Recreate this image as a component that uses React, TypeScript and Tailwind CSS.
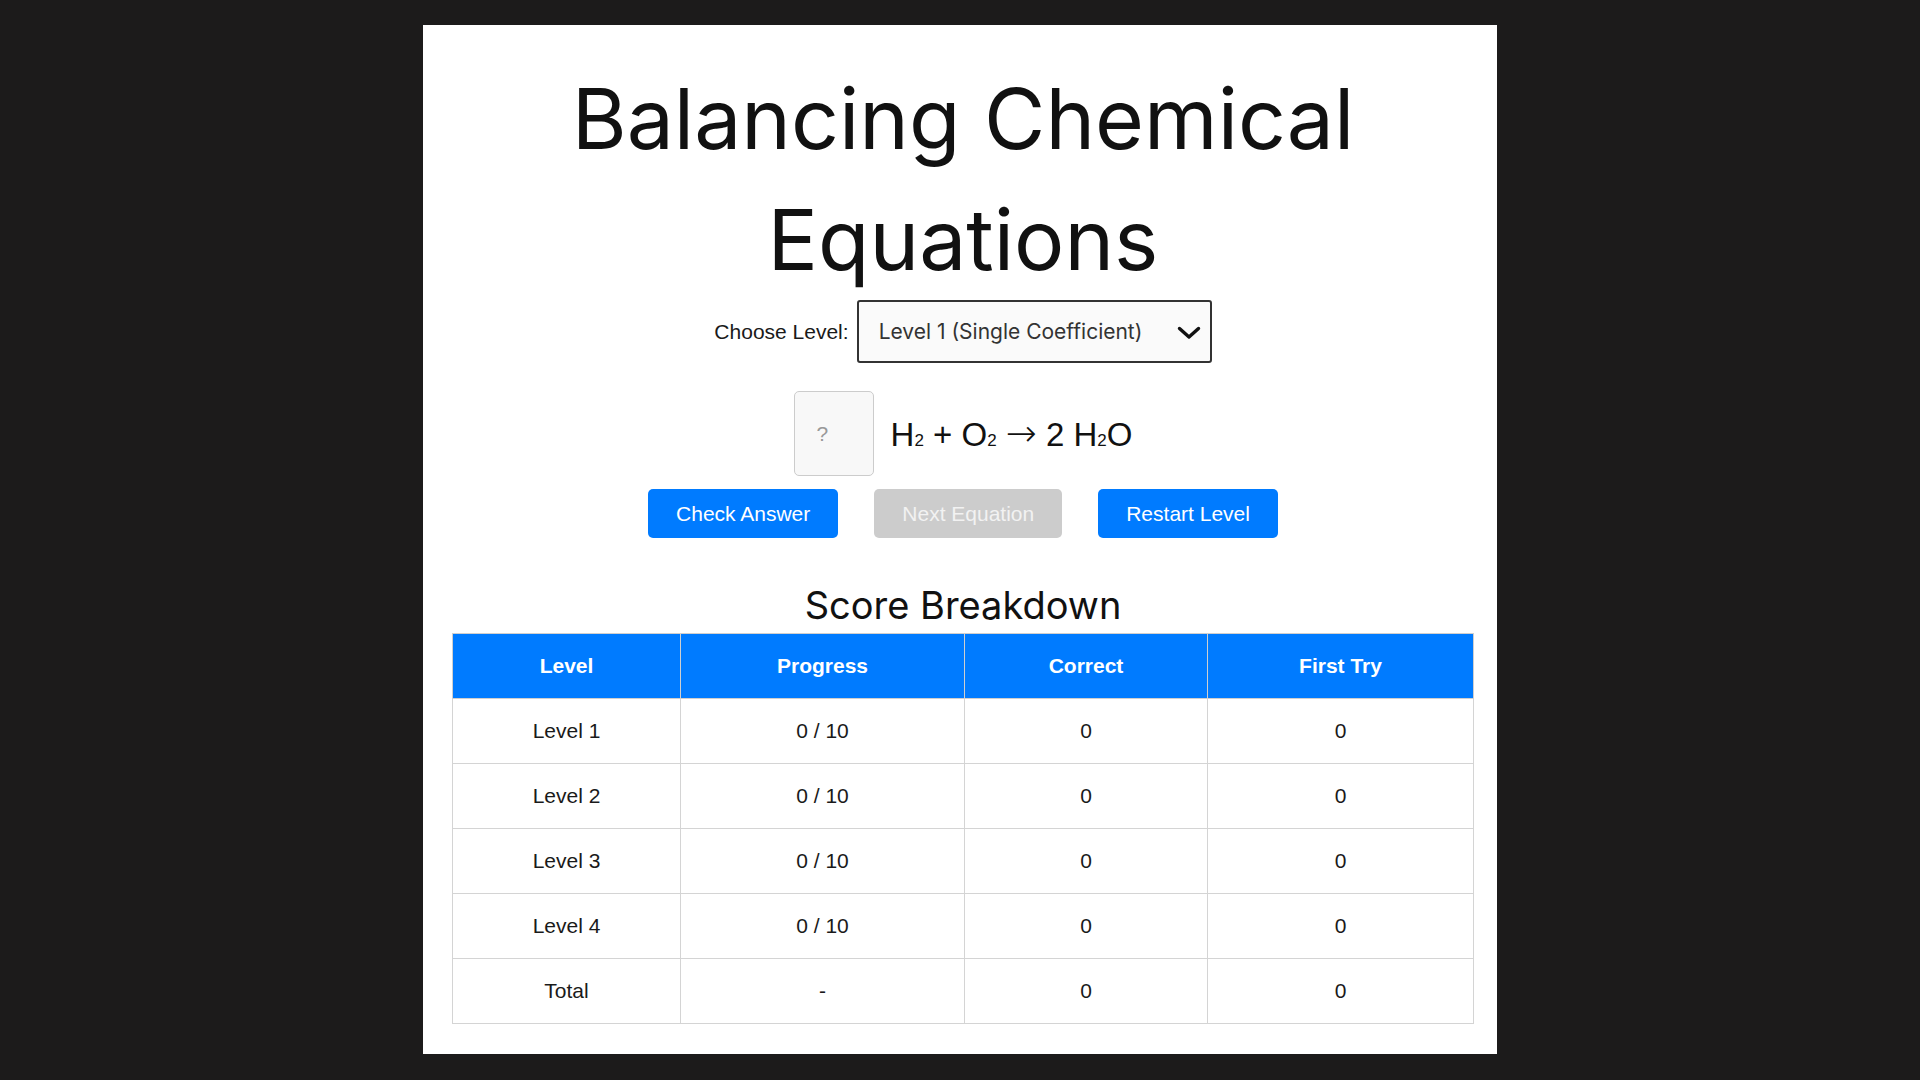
import React, { useState } from 'react';

type Row = { level: string; progress: string; correct: number; firstTry: number };

const rows: Row[] = [
  { level: 'Level 1', progress: '0 / 10', correct: 0, firstTry: 0 },
  { level: 'Level 2', progress: '0 / 10', correct: 0, firstTry: 0 },
  { level: 'Level 3', progress: '0 / 10', correct: 0, firstTry: 0 },
  { level: 'Level 4', progress: '0 / 10', correct: 0, firstTry: 0 },
  { level: 'Total', progress: '-', correct: 0, firstTry: 0 },
];

const levels = [
  'Level 1 (Single Coefficient)',
  'Level 2 (Two Coefficients)',
  'Level 3 (Three Coefficients)',
  'Level 4 (All Coefficients)',
];

// small baseline digit used for subscripts in the formula
function Sub({ children }: { children: React.ReactNode }) {
  return <span className="text-[17px]">{children}</span>;
}

export default function App() {
  const [level, setLevel] = useState(levels[0]);
  const [answer, setAnswer] = useState('');

  return (
    <div className="min-h-screen bg-[#1c1b1b] pt-[25px] font-['Liberation_Sans',Arial,sans-serif]">
      <div className="mx-auto w-[1074px] bg-white pt-[33px] pb-[30px] pl-[29px] pr-[23px]">
        {/* heading */}
        <h1 className="text-center font-['Inter',sans-serif] text-[84px] font-normal leading-[121px] text-[#111]">
          Balancing Chemical
          <br />
          Equations
        </h1>

        {/* level picker */}
        <div className="flex items-center justify-center gap-[8px]">
          <label htmlFor="level" className="text-[21px] text-[#1a1a1a]">
            Choose Level:
          </label>
          <div className="relative">
            <select
              id="level"
              value={level}
              onChange={(e) => setLevel(e.target.value)}
              className="h-[63px] w-[355px] appearance-none rounded-[3px] border-2 border-[#333] bg-[#fafafa] pl-[20px] font-['Inter',sans-serif] text-[21px] text-[#333] outline-none"
            >
              {levels.map((l) => (
                <option key={l} value={l}>
                  {l}
                </option>
              ))}
            </select>
            <svg
              className="pointer-events-none absolute right-[11px] top-[26px]"
              width="24"
              height="14"
              viewBox="0 0 24 14"
              fill="none"
            >
              <path d="M2.5 2.5 L12 11 L21.5 2.5" stroke="#111" strokeWidth="3.4" strokeLinecap="round" strokeLinejoin="round" />
            </svg>
          </div>
        </div>

        {/* equation */}
        <div className="mt-[28px] flex items-center justify-center">
          <input
            type="text"
            value={answer}
            onChange={(e) => setAnswer(e.target.value)}
            placeholder="?"
            className="h-[85px] w-[80px] rounded-[5px] border border-[#ccc] bg-[#f8f8f8] pl-[22px] text-[21px] text-[#222] outline-none placeholder:text-[#999]"
          />
          <span className="ml-[17px] text-[33px] text-[#111]">
            H<Sub>2</Sub> + O<Sub>2</Sub>{' '}
            <span className="font-['DejaVu_Sans',sans-serif] text-[37px] font-extralight">→</span> 2 H<Sub>2</Sub>O
          </span>
        </div>

        {/* actions */}
        <div className="mt-[13px] flex justify-center gap-[36px]">
          <button className="h-[49px] rounded-[5px] bg-[#007bff] px-[28px] text-[21px] text-white">Check Answer</button>
          <button disabled className="h-[49px] rounded-[5px] bg-[#cccccc] px-[28px] text-[21px] text-[#f2f2f2]">
            Next Equation
          </button>
          <button className="h-[49px] rounded-[5px] bg-[#007bff] px-[28px] text-[21px] text-white">Restart Level</button>
        </div>

        <h2 className="mt-[44px] text-center font-['Inter',sans-serif] text-[38px] font-normal leading-[46px] text-[#111]">
          Score Breakdown
        </h2>

        <table className="mt-[5px] w-full table-fixed border-collapse text-center text-[21px] text-[#1a1a1a]">
          <colgroup>
            <col className="w-[228px]" />
            <col className="w-[284px]" />
            <col className="w-[243px]" />
            <col />
          </colgroup>
          <thead>
            <tr className="h-[65px] bg-[#007bff] text-white">
              <th className="border border-[#cfcfcf] font-bold">Level</th>
              <th className="border border-[#cfcfcf] font-bold">Progress</th>
              <th className="border border-[#cfcfcf] font-bold">Correct</th>
              <th className="border border-[#cfcfcf] font-bold">First Try</th>
            </tr>
          </thead>
          <tbody>
            {rows.map((r) => (
              <tr key={r.level} className="h-[65px]">
                <td className="border border-[#d4d4d4]">{r.level}</td>
                <td className="border border-[#d4d4d4]">{r.progress}</td>
                <td className="border border-[#d4d4d4]">{r.correct}</td>
                <td className="border border-[#d4d4d4]">{r.firstTry}</td>
              </tr>
            ))}
          </tbody>
        </table>
      </div>
    </div>
  );
}
